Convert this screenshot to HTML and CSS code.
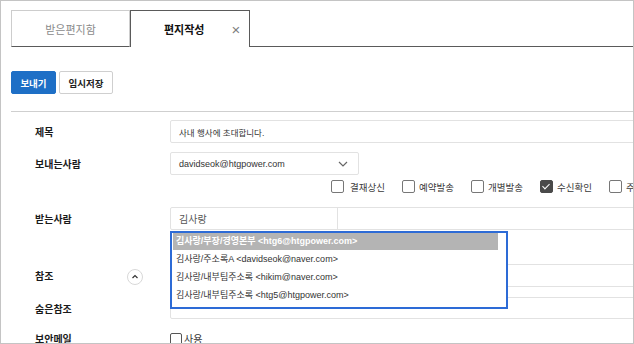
FILE: index.html
```html
<!DOCTYPE html>
<html lang="ko">

<head>
  <meta charset="UTF-8">
  <meta name="viewport" content="width=device-width, initial-scale=1.0">
  <title>편지작성</title>
  <link rel="stylesheet" href="styles.css">
</head>

<body>
  <div class="frame">
    <div class="tabs">
      <div class="tab">받은편지함</div>
      <div class="tab active">
        <span>편지작성</span>
        <span class="close">&times;</span>
      </div>
      <div class="tab-rest"></div>
    </div>

    <div class="toolbar">
      <button class="btn btn-primary">보내기</button>
      <button class="btn btn-save">임시저장</button>
    </div>

    <div class="form">
      <div class="row row-subject">
        <div class="label">제목</div>
        <div class="field">
          <div class="input input-wide subject">사내 행사에 초대합니다.</div>
        </div>
      </div>

      <div class="row row-from">
        <div class="label">보내는사람</div>
        <div class="field">
          <div class="input select">
            <span>davidseok@htgpower.com</span>
            <svg class="chevron" width="10" height="6" viewBox="0 0 10 6">
              <polyline points="1,1 5,5 9,1" fill="none" stroke="#666" stroke-width="1.2" />
            </svg>
          </div>
        </div>
      </div>

      <div class="options">
        <label class="check"><span class="box"></span>결재상신</label>
        <label class="check"><span class="box"></span>예약발송</label>
        <label class="check"><span class="box"></span>개별발송</label>
        <label class="check"><span class="box checked"></span>수신확인</label>
        <label class="check"><span class="box"></span>주소록</label>
      </div>

      <div class="row row-to">
        <div class="label">받는사람</div>
        <div class="field">
          <div class="input input-wide recipient">
            <div class="token-input">김사랑</div>
          </div>

          <!-- autocomplete list -->
          <ul class="suggest">
            <li class="selected">김사랑/부장/경영본부 &lt;htg6@htgpower.com&gt;</li>
            <li>김사랑/주소록A &lt;davidseok@naver.com&gt;</li>
            <li>김사랑/내부팀주소록 &lt;hikim@naver.com&gt;</li>
            <li>김사랑/내부팀주소록 &lt;htg5@htgpower.com&gt;</li>
          </ul>
        </div>
      </div>

      <div class="row row-cc">
        <div class="label">
          참조
          <span class="toggle">
            <svg width="16" height="16" viewBox="0 0 16 16">
              <circle cx="8" cy="8" r="7.5" fill="#fff" stroke="#d8d8d8" />
              <polyline points="5.5,9 8,6.5 10.5,9" fill="none" stroke="#333" stroke-width="1.2" />
            </svg>
          </span>
        </div>
        <div class="field">
          <div class="input input-wide"></div>
        </div>
      </div>

      <div class="row row-bcc">
        <div class="label">숨은참조</div>
        <div class="field">
          <div class="input input-wide"></div>
        </div>
      </div>

      <div class="row row-secure">
        <div class="label">보안메일</div>
        <div class="field">
          <label class="check plain"><span class="box"></span>사용</label>
        </div>
      </div>
    </div>
  </div>
</body>

</html>
```

FILE: styles.css
```css
:root {
  --frame: #c4c4c4;
  --dark-line: #5a5a5a;
  --light-line: #e2e2e2;
  --text: #222;
  --muted: #8a8a8a;
  --blue: #1e6fc6;
  --focus: #2d6bd6;
  --spacing: 24px;
}

* {
  box-sizing: border-box;
}

body {
  margin: 0;
  font-family: "Liberation Sans", "Noto Sans CJK KR", sans-serif;
  color: var(--text);
  background: #fff;
}

.frame {
  width: 634px;
  height: 344px;
  border: 1px solid var(--frame);
  padding: 9px 0 0 10px;
  overflow: hidden;
}

/* tabs */

.tabs {
  display: flex;
  height: 37px;
}

.tab {
  width: 119px;
  display: flex;
  align-items: center;
  justify-content: center;
  font-size: 11px;
  color: var(--muted);
  border: 1px solid #cdcdcd;
  border-bottom: 1px solid var(--dark-line);
}

.tab.active {
  width: 120px;
  justify-content: flex-start;
  padding-left: 33px;
  color: #111;
  font-weight: bold;
  border: 1px solid var(--dark-line);
  border-bottom: none;
}

.close {
  margin-left: 27px;
  font-weight: normal;
  font-size: 15px;
  color: #808080;
}

.tab-rest {
  flex: 1;
  border-bottom: 1px solid var(--dark-line);
}

/* toolbar */

.toolbar {
  display: flex;
  gap: 3px;
  margin-top: 24px;
  padding-bottom: 17px;
  border-bottom: 1px solid #cfcfcf;
}

.btn {
  height: 23px;
  padding: 0;
  font-family: inherit;
  font-size: 9.5px;
  font-weight: bold;
  color: #222;
  background: #fff;
  border: 1px solid #cfcfcf;
  border-radius: 2px;
}

.btn-primary {
  width: 45px;
  color: #fff;
  background: var(--blue);
  border-color: var(--blue);
}

.btn-save {
  width: 54px;
}

/* form */

.form {
  padding-left: var(--spacing);
}

.row {
  display: flex;
  align-items: center;
}

.label {
  width: 135px;
  flex: none;
  display: flex;
  align-items: center;
  font-size: 10px;
  font-weight: bold;
  color: #1a1a1a;
}

.field {
  flex: 1;
  position: relative;
}

.input {
  height: 23px;
  display: flex;
  align-items: center;
  padding: 0 8px;
  font-size: 9px;
  color: #333;
  border: 1px solid var(--light-line);
  border-radius: 2px;
}

.input-wide {
  width: calc(100% + 20px);
}

.subject {
  font-size: 8.5px;
}

.row-subject {
  margin-top: 8px;
}

.row-from {
  margin-top: 9px;
}

.select {
  width: 189px;
  justify-content: space-between;
  padding-right: 10px;
}

.options {
  display: flex;
  margin-top: 5px;
  padding-left: 296px;
  height: 13px;
  white-space: nowrap;
}

.check {
  flex: none;
  display: flex;
  align-items: center;
  font-size: 9.5px;
  color: #3a3a3a;
  margin-right: 17px;
  white-space: nowrap;
}

.check:first-child .box {
  margin-right: 6px;
}

.box {
  flex: none;
  width: 13px;
  height: 13px;
  margin-right: 4px;
  border: 1px solid #777;
  border-radius: 2px;
  background: #fff;
  position: relative;
}

.box.checked {
  background: #4a4a4a;
  border-color: #4a4a4a;
}

.box.checked::after {
  content: "";
  position: absolute;
  left: 3.5px;
  top: 1px;
  width: 3px;
  height: 6px;
  border-right: 1.6px solid #fff;
  border-bottom: 1.6px solid #fff;
  transform: rotate(45deg);
}

.row-to {
  margin-top: 14px;
}

.recipient {
  padding: 0;
}

.token-input {
  width: 167px;
  height: 100%;
  display: flex;
  align-items: center;
  padding-left: 8px;
  font-size: 10px;
  color: #555;
  border-right: 1px solid var(--light-line);
}

.suggest {
  position: absolute;
  left: 0;
  top: 24px;
  z-index: 2;
  width: 338px;
  height: 78px;
  margin: 0;
  padding: 0 8px 0 1px;
  list-style: none;
  background: #fff;
  border: 2px solid var(--focus);
}

.suggest li {
  height: 18px;
  line-height: 18px;
  padding-left: 3px;
  font-size: 9px;
  color: #333;
}

.suggest li.selected {
  height: 17px;
  line-height: 17px;
  color: #fff;
  font-weight: bold;
  background: #b4b4b4;
}

.row-cc {
  margin-top: 34px;
}

.toggle {
  display: flex;
  margin-left: 74px;
  margin-top: 2px;
}

.row-bcc {
  margin-top: 10px;
}

.row-bcc .input {
  height: 22px;
}

.row-secure {
  margin-top: 13px;
  height: 13px;
}

.check.plain {
  font-size: 10px;
  color: #333;
}

.check.plain .box {
  width: 12px;
  height: 12px;
  margin-right: 2px;
  border-color: #555;
}
```
